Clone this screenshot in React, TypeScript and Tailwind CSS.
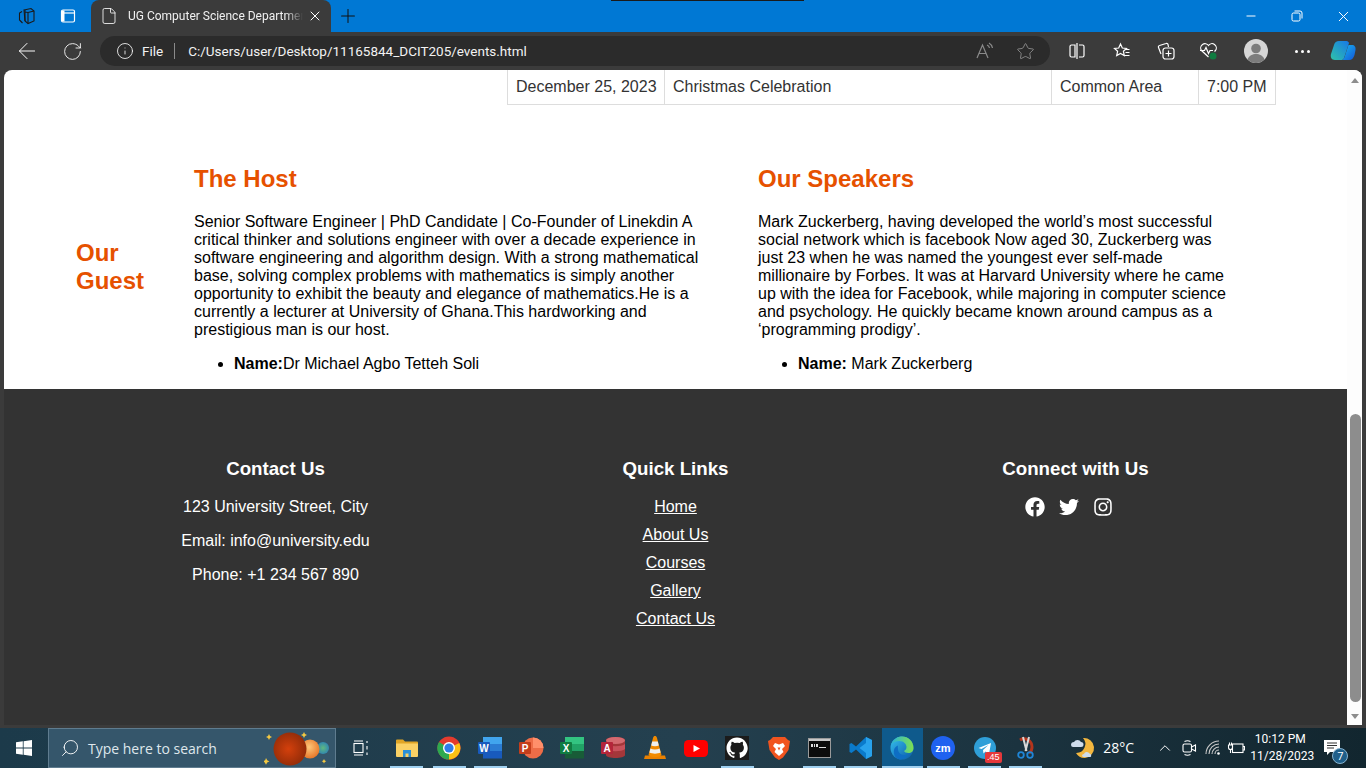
import { ArrowLeft, ChevronUp, File, Info, Minus, Plus, RotateCw, Search, Star, X } from "lucide-react"
import { FaFacebook, FaInstagram, FaTwitter } from "react-icons/fa"

const Segoe = "font-['Open_Sans',sans-serif]"
const Narrow = "font-['Roboto',sans-serif]"

const WorkspacesIcon = () => (
  <svg width="18" height="18" viewBox="0 0 18 18" fill="none" stroke="#1a1a1a" strokeWidth="1.1">
    <path d="M7 3l7-1.5 3 2.5v10l-6 2.5-3-2.5z" />
    <path d="M5 4.5L2.5 6v7l3 3M8 3v11M11 5.5V16M8 5l3 .5 6-1.5" />
  </svg>
)

const VerticalTabsIcon = () => (
  <svg width="16" height="16" viewBox="0 0 16 16" fill="none" stroke="#fff" strokeWidth="1.2">
    <rect x="1.5" y="2" width="13" height="12" rx="1.5" />
    <path d="M1.5 5h13" />
    <path d="M2 2.5h2.5v11H2z" fill="#fff" stroke="none" />
  </svg>
)

const RestoreIcon = () => (
  <svg width="12" height="12" viewBox="0 0 12 12" fill="none" stroke="#fff" strokeWidth="1">
    <rect x="1" y="3" width="8" height="8" rx="1.5" />
    <path d="M3.5 1h5.5a2 2 0 0 1 2 2v5.5" />
  </svg>
)

const ReadAloudIcon = () => (
  <svg width="20" height="18" viewBox="0 0 20 18" fill="none" stroke="#8a8a8a" strokeWidth="1.2">
    <path d="M2 16L7.500 3 13 16M4 11.500h7" />
    <path d="M12 3a4 4 0 0 1 2.500 3M14 1a7 7 0 0 1 3.500 5" />
  </svg>
)

const SplitIcon = () => (
  <svg width="18" height="18" viewBox="0 0 18 18" fill="none" stroke="#fff" strokeWidth="1.2">
    <path d="M7 3H3.500A1.500 1.500 0 0 0 2 4.500v9A1.500 1.500 0 0 0 3.500 15H7zM11 3h3.500A1.500 1.500 0 0 1 16 4.500v9a1.500 1.500 0 0 1-1.500 1.500H11M9 1v16" />
  </svg>
)

const FavoritesIcon = () => (
  <svg width="18" height="18" viewBox="0 0 18 18" fill="none" stroke="#fff" strokeWidth="1.2">
    <path d="M7.500 2l1.800 4 4.200.4-3.100 2.900.9 4.300-3.800-2.200-3.800 2.200.9-4.300L1.500 6.400 5.700 6z" />
    <path d="M12.500 7.500h4M12.500 10.500h4M11.500 13.500h5" />
  </svg>
)

const CollectionsIcon = () => (
  <svg width="18" height="18" viewBox="0 0 18 18" fill="none" stroke="#fff" strokeWidth="1.2">
    <path d="M4 12L1.500 5.500a1.500 1.500 0 0 1 1-2L9 1.500a1.500 1.500 0 0 1 2 1L11.500 5" />
    <rect x="6" y="6" width="11" height="11" rx="2.500" />
    <path d="M11.500 8.500v6M8.500 11.500h6" />
  </svg>
)

const HealthIcon = () => (
  <svg width="20" height="18" viewBox="0 0 20 18" fill="none">
    <path d="M9.500 15L2.500 8.500a4 4 0 0 1 7-5 4 4 0 0 1 7 5l-1 1" stroke="#fff" strokeWidth="1.200" />
    <path d="M1 8.500h4.500l1.500-3 2.500 6 1.500-3h3" stroke="#fff" strokeWidth="1.200" />
    <circle cx="14" cy="14" r="3.500" fill="#107c41" />
  </svg>
)

const AvatarIcon = () => (
  <svg width="24" height="24" viewBox="0 0 24 24">
    <circle cx="12" cy="12" r="12" fill="#d6d6d6" />
    <circle cx="12" cy="9.500" r="4.800" fill="#7c7c7c" />
    <path d="M3.500 20.500c1.500-4 5-5.500 8.500-5.500s7 1.500 8.500 5.500A12 12 0 0 1 3.500 20.500z" fill="#7c7c7c" />
  </svg>
)

const CopilotIcon = () => (
  <svg width="26" height="24" viewBox="0 0 26 24">
    <defs>
      <linearGradient id="copA" x1="0" y1="1" x2="1" y2="0">
        <stop offset="0" stopColor="#2fc3a8" />
        <stop offset="1" stopColor="#1778e8" />
      </linearGradient>
      <linearGradient id="copB" x1="0" y1="0" x2="1" y2="1">
        <stop offset="0" stopColor="#17b7ef" />
        <stop offset="1" stopColor="#1456d8" />
      </linearGradient>
    </defs>
    <path d="M9 2h7.500c1.500 0 2 1 2.500 2L14 19c-.5 1.500-1.500 2-3 2H5c-3.500 0-4.800-3-4-6l3-9c.7-2.500 2.500-4 5-4z" fill="url(#copA)" />
    <path d="M12 21h7c3 0 4.500-2 5.500-5l1-5c.5-3-1-5-3.500-5h-3.500l-4 12c-.5 1.500-1.500 3-2.500 3z" fill="url(#copB)" />
  </svg>
)

const WindowsLogo = () => (
  <svg width="16" height="16" viewBox="0 0 16 16" fill="#fff">
    <path d="M0 2.300l6.800-1v6.300H0zM7.600 1.200L16 0v7.600H7.600zM0 8.400h6.800v6.300l-6.800-1zM7.600 8.400H16V16l-8.400-1.200z" />
  </svg>
)

const Planets = () => (
  <svg width="70" height="36" viewBox="0 0 70 36">
    <defs>
      <radialGradient id="marsGrad" cx="0.45" cy="0.5" r="0.6">
        <stop offset="0" stopColor="#d4400c" />
        <stop offset="1" stopColor="#8c2a08" />
      </radialGradient>
      <radialGradient id="sunGrad" cx="0.45" cy="0.4" r="0.6">
        <stop offset="0" stopColor="#fdc77a" />
        <stop offset="1" stopColor="#e8782a" />
      </radialGradient>
      <radialGradient id="earthGrad" cx="0.5" cy="0.5" r="0.6">
        <stop offset="0" stopColor="#5fb87f" />
        <stop offset="1" stopColor="#2a7fb8" />
      </radialGradient>
    </defs>
    <circle cx="59" cy="18" r="6" fill="url(#earthGrad)" />
    <circle cx="46" cy="19" r="9.500" fill="url(#sunGrad)" />
    <circle cx="26" cy="19" r="16.500" fill="url(#marsGrad)" />
    <g fill="#f4c842">
      <path d="M5 4l1 2 2 1-2 1-1 2-1-2-2-1 2-1zM40 2l1 2 2 1-2 1-1 2-1-2-2-1 2-1z" />
      <path d="M2 28l1.200 2.200 2.200 1.200-2.200 1.200-1.200 2.200-1.200-2.200L-1 31.400l2.200-1.200zM60 29l.8 1.500 1.500.8-1.500.8-.8 1.500-.8-1.500-1.500-.8 1.500-.8z" />
    </g>
  </svg>
)

const TaskViewIcon = () => (
  <svg width="16" height="16" viewBox="0 0 16 16" fill="none" stroke="#fff" strokeWidth="1.100">
    <rect x="1" y="3.500" width="9" height="9" />
    <path d="M1 1h9M1 15h9M14 1v2M14 6v3.500M14 12.500v2.500" />
  </svg>
)

const ExplorerIcon = () => (
  <svg width="22" height="20" viewBox="0 0 22 20">
    <path d="M0 2.500A1 1 0 0 1 1 1.500h6l2 2h12a1 1 0 0 1 1 1V6H0z" fill="#e0a526" />
    <path d="M0 5.500h22V18a1 1 0 0 1-1 1H1a1 1 0 0 1-1-1z" fill="#fad165" />
    <path d="M7 12h8v7h-2.500v-3.500h-3V19H7z" fill="#2a8fd8" />
  </svg>
)

const ChromeIcon = () => (
  <svg width="24" height="24" viewBox="0 0 24 24">
    <circle cx="12" cy="12" r="11.500" fill="#e33b2e" />
    <path d="M12 12L22.300 7A11.500 11.500 0 0 1 12 23.500z" fill="#fbc116" />
    <path d="M12 12l-10-6A11.500 11.500 0 0 0 12 23.500z" fill="#2da94f" />
    <circle cx="12" cy="12" r="6" fill="#fff" />
    <circle cx="12" cy="12" r="4.600" fill="#2f7de9" />
  </svg>
)

const OfficeTile = ({ letter, tile, colors }: { letter: string; tile: string; colors: string[] }) => (
  <svg width="25" height="22" viewBox="0 0 25 22">
    <rect x="5" y="0" width="19" height="7.500" fill={colors[0]} />
    <rect x="5" y="7" width="19" height="7.500" fill={colors[1]} />
    <rect x="5" y="14" width="19" height="7.500" fill={colors[2]} />
    <rect x="0" y="5" width="12" height="12" rx="1" fill={tile} />
    <text x="6" y="15" fontSize="10" fontWeight="700" fill="#fff" textAnchor="middle" fontFamily="Liberation Sans">
      {letter}
    </text>
  </svg>
)

const PowerPointIcon = () => (
  <svg width="25" height="22" viewBox="0 0 25 22">
    <circle cx="14" cy="11" r="10.500" fill="#ed6c47" />
    <path d="M14 .5A10.500 10.500 0 0 1 24.500 11H14z" fill="#ff8f6b" />
    <rect x="0" y="5" width="12" height="12" rx="1" fill="#c43e1c" />
    <text x="6" y="15" fontSize="10" fontWeight="700" fill="#fff" textAnchor="middle" fontFamily="Liberation Sans">
      P
    </text>
  </svg>
)

const AccessIcon = () => (
  <svg width="25" height="22" viewBox="0 0 25 22">
    <path d="M5 3c0-4 19-4 19 0v15c0 4-19 4-19 0z" fill="#a4373a" />
    <ellipse cx="14.500" cy="3.500" rx="9.500" ry="3.500" fill="#d46a70" />
    <path d="M5 7c3 3 16 3 19 0v5c-3 3-16 3-19 0z" fill="#c8515b" />
    <rect x="0" y="5" width="12" height="12" rx="1" fill="#b3263a" />
    <text x="6" y="15" fontSize="10" fontWeight="700" fill="#fff" textAnchor="middle" fontFamily="Liberation Sans">
      A
    </text>
  </svg>
)

const VlcIcon = () => (
  <svg width="22" height="24" viewBox="0 0 22 24">
    <path d="M1 19.500h20L22 23H0z" fill="#e98000" />
    <path d="M11 0c1 0 1.500.5 2 2l4.500 17c-3 3-10 3-13 0L9 2c.5-1.500 1-2 2-2z" fill="#f18a00" />
    <path d="M8.200 5.500h5.600l1 4c-2 1-5.600 1-7.600 0zM6.400 12.500c2.500 1.200 6.700 1.200 9.200 0l1 4c-3 1.500-8.200 1.500-11.200 0z" fill="#efefef" />
  </svg>
)

const YoutubeIcon = () => (
  <svg width="24" height="17" viewBox="0 0 24 17">
    <rect width="24" height="17" rx="4.500" fill="#f00" />
    <path d="M9.500 5l6.500 3.500-6.500 3.500z" fill="#fff" />
  </svg>
)

const GithubIcon = () => (
  <svg width="24" height="24" viewBox="0 0 24 24">
    <rect width="24" height="24" fill="#1b1b1b" />
    <path
      fill="#fff"
      d="M12 1.500C6.200 1.500 1.500 6.200 1.500 12c0 4.600 3 8.600 7.200 10 .5.100.7-.2.700-.5v-1.800c-2.900.6-3.500-1.400-3.500-1.400-.5-1.200-1.200-1.500-1.200-1.500-1-.7.100-.7.100-.7 1 .1 1.600 1.100 1.600 1.100.9 1.600 2.500 1.100 3.100.9.100-.7.400-1.100.700-1.400-2.300-.3-4.800-1.200-4.800-5.200 0-1.100.4-2.100 1.100-2.800-.1-.3-.5-1.300.1-2.800 0 0 .9-.3 2.900 1.100a10 10 0 0 1 5.300 0c2-1.400 2.900-1.100 2.900-1.100.6 1.500.2 2.500.1 2.800.7.700 1.100 1.700 1.100 2.800 0 4-2.500 4.900-4.800 5.200.4.300.7 1 .7 1.900v2.900c0 .3.200.6.700.5 4.200-1.400 7.200-5.400 7.200-10C22.500 6.200 17.800 1.500 12 1.500z"
    />
  </svg>
)

const BraveIcon = () => (
  <svg width="22" height="24" viewBox="0 0 22 24">
    <path d="M5 1h12l3 3 2 1-1.500 9L15 21.500 11 24l-4-2.500L1.500 14 0 5l2-1z" fill="#f1541f" />
    <path d="M7 7l4 1.500L15 7l2 3-3 3 1.500 3-4.500 4-4.500-4L8 13l-3-3z" fill="#fff" />
    <path d="M9.500 11.500h3l-1.500 3z" fill="#f1541f" />
  </svg>
)

const CmdIcon = () => (
  <svg width="23" height="20" viewBox="0 0 23 20">
    <rect x="0.500" y="0.500" width="22" height="19" fill="#0c0c0c" stroke="#9a9a9a" />
    <rect x="1" y="1" width="21" height="2" fill="#c8c8c8" />
    <path d="M3 6h2v3H3zM6 6h1v3H6zM8 6h2v3H8zM11 9h7v1h-7z" fill="#ddd" />
  </svg>
)

const VscodeIcon = () => (
  <svg width="24" height="24" viewBox="0 0 24 24">
    <path d="M17 1l6 3v16l-6 3L7 13.500 2.500 17 .5 16v-8l2-1L7 10.500z" fill="#0a7acb" />
    <path d="M17 1l6 3v16l-6 3zM17 7l-6.500 5 6.500 5z" fill="#28a2ec" fillRule="evenodd" />
  </svg>
)

const EdgeIcon = () => (
  <svg width="24" height="24" viewBox="0 0 24 24">
    <defs>
      <linearGradient id="edgeA" x1="0" y1="0" x2="1" y2="1">
        <stop offset="0" stopColor="#35c1f1" />
        <stop offset="1" stopColor="#0c59a4" />
      </linearGradient>
      <linearGradient id="edgeB" x1="0" y1="0" x2="1" y2="0">
        <stop offset="0" stopColor="#2bb3d6" />
        <stop offset="1" stopColor="#7ee04f" />
      </linearGradient>
    </defs>
    <circle cx="12" cy="12" r="11.500" fill="url(#edgeA)" />
    <path d="M1 9C3 3 8 .5 12 .5 18 .5 23.500 5 23.500 12c0 3-2 5-5 5-2.500 0-4-1-4.500-2 1.500-1 2.500-2 2.500-4 0-3-3-6-7-6-4 0-7 2-8.500 4z" fill="url(#edgeB)" />
    <path d="M8 13c0 3 2.500 6 6 6 1.500 0 3-.5 4-1-2 3-5 5.500-7 5.500C6 23.500 3 19 4 14c.5-2 2-4 4-4.500-.3 1-.3 2-0 3.500z" fill="#0e6ec4" />
  </svg>
)

const ZoomIcon = () => (
  <svg width="24" height="24" viewBox="0 0 24 24">
    <circle cx="12" cy="12" r="12" fill="#1f62f0" />
    <text x="12" y="15.500" fontSize="11" fontWeight="700" fill="#fff" textAnchor="middle" fontFamily="Liberation Sans">
      zm
    </text>
  </svg>
)

const TelegramIcon = () => (
  <span className="relative flex">
    <svg width="22" height="22" viewBox="0 0 22 22">
      <circle cx="11" cy="11" r="11" fill="#2f9fd8" />
      <path d="M4.500 11L17 6l-2 11-3.500-2.500-2 2-.5-3.500 5.500-5-7 4z" fill="#fff" />
    </svg>
    <span className="absolute -right-1.5 -bottom-1 bg-[#e5383b] rounded-[2px] px-[2px] text-[9px] leading-[11px] text-white font-['Liberation_Sans',sans-serif]">
      .45
    </span>
  </span>
)

const SnipIcon = () => (
  <svg width="20" height="24" viewBox="0 0 20 24" fill="none">
    <path d="M4 4a8 8 0 0 1 12 7c0 3-1 5-3 6" stroke="#b5351c" strokeWidth="3" />
    <path d="M7 1l3.500 14M13 1l-3.500 14" stroke="#d8d8d8" strokeWidth="2" />
    <circle cx="5" cy="19" r="2.800" stroke="#1f86d8" strokeWidth="1.800" />
    <circle cx="14" cy="19" r="2.800" stroke="#1f86d8" strokeWidth="1.800" />
  </svg>
)

const WeatherIcon = () => (
  <svg width="26" height="24" viewBox="0 0 26 24">
    <path d="M14 2a10 10 0 0 1 2 20 10 10 0 0 1-9-5 9 9 0 0 0 7-15z" fill="#f3b73f" />
    <path d="M2 9a3 3 0 0 1 3-3 4 4 0 0 1 7 0 2.500 2.500 0 0 1 0 5H4a2.200 2.200 0 0 1-2-2z" fill="#cfdcec" />
    <path d="M13 20a2 2 0 0 1 2-2 3 3 0 0 1 5.500-.5 2 2 0 0 1 1 3.500H15a2 2 0 0 1-2-1z" fill="#cfdcec" />
  </svg>
)

const MeetIcon = () => (
  <svg width="16" height="20" viewBox="0 0 16 20" fill="none" stroke="#fff" strokeWidth="1.100">
    <rect x="2" y="6" width="8.500" height="8" rx="1.500" />
    <path d="M10.500 9l4-2v6l-4-2zM3.500 3.500a7 7 0 0 1 6 0M3.500 16.500a7 7 0 0 0 6 0" />
  </svg>
)

const WifiIcon = () => (
  <svg width="16" height="16" viewBox="0 0 16 16" fill="none" stroke="#c9c9c9" strokeWidth="1.100">
    <path d="M1 14A13 13 0 0 1 14 1M4 14A10 10 0 0 1 14 4M7 14a7 7 0 0 1 7-7M10 14a4 4 0 0 1 4-4" />
    <circle cx="13.500" cy="13.500" r="1.300" fill="#fff" stroke="none" />
  </svg>
)

const BatteryIcon = () => (
  <svg width="18" height="16" viewBox="0 0 18 16" fill="none" stroke="#fff" strokeWidth="1.100">
    <rect x="5.500" y="4" width="10.500" height="8.500" />
    <path d="M16 6.500h1.500v3.500H16M1 5h5M2.500 2.500V5M4.500 2.500V5M1.500 5v2.500a2 2 0 0 0 4 0V5M3.500 9.500V13" />
  </svg>
)

const Toolbtn = ({ x, children }: { x: string; children: React.ReactNode }) => (
  <span className={`absolute top-0 h-full w-8 -ml-4 flex items-center justify-center ${x}`}>{children}</span>
)

function TitleBar() {
  return (
    <div className="relative h-8 bg-[#0078d4] shrink-0">
      <div className="absolute left-[611px] top-0 h-px w-[193px] bg-[#1a1a1a]" />
      <Toolbtn x="left-[26px]">
        <WorkspacesIcon />
      </Toolbtn>
      <Toolbtn x="left-[68px]">
        <VerticalTabsIcon />
      </Toolbtn>
      <div className={`absolute left-[91px] top-0 h-8 w-[240px] bg-[#3b3b3b] rounded-t-lg flex items-center pl-[9px] ${Narrow}`}>
        <File size={18} strokeWidth={1.1} className="text-white shrink-0" />
        <span className="ml-[10px] w-[175px] overflow-hidden whitespace-nowrap text-[12px] text-[#f0f0f0] [mask-image:linear-gradient(to_right,black_90%,transparent)]">
          UG Computer Science Department
        </span>
        <X size={16} strokeWidth={1.5} className="text-white ml-[4px] shrink-0" />
      </div>
      <Toolbtn x="left-[348px]">
        <Plus size={22} strokeWidth={1.1} className="text-[#111]" />
      </Toolbtn>
      <Toolbtn x="left-[1251px]">
        <Minus size={14} strokeWidth={1.7} className="text-white" />
      </Toolbtn>
      <Toolbtn x="left-[1297px]">
        <RestoreIcon />
      </Toolbtn>
      <Toolbtn x="left-[1343px]">
        <X size={17} strokeWidth={1.4} className="text-white" />
      </Toolbtn>
    </div>
  )
}

function AddressBar() {
  return (
    <div className="relative h-[38px] bg-[#3b3b3b] shrink-0">
      <Toolbtn x="left-[27px]">
        <ArrowLeft size={26} strokeWidth={0.9} className="text-white" />
      </Toolbtn>
      <Toolbtn x="left-[72px]">
        <RotateCw size={21} strokeWidth={1} className="text-white" />
      </Toolbtn>
      <div className={`absolute left-[100px] top-[4px] h-[30px] w-[950px] rounded-full bg-[#2b2b2b] flex items-center pl-[16px] text-[13.5px] text-[#f2f2f2] ${Narrow}`}>
        <Info size={18} strokeWidth={1.1} className="text-white" />
        <span className="ml-[8px]">File</span>
        <span className="ml-[11px] h-[16px] w-px bg-[#8a8a8a]" />
        <span className="ml-[13px]">C:/Users/user/Desktop/11165844_DCIT205/events.html</span>
      </div>
      <Toolbtn x="left-[985px]">
        <ReadAloudIcon />
      </Toolbtn>
      <Toolbtn x="left-[1025px]">
        <Star size={19} strokeWidth={1} className="text-[#9a9a9a]" />
      </Toolbtn>
      <Toolbtn x="left-[1077px]">
        <SplitIcon />
      </Toolbtn>
      <Toolbtn x="left-[1122px]">
        <FavoritesIcon />
      </Toolbtn>
      <Toolbtn x="left-[1166px]">
        <CollectionsIcon />
      </Toolbtn>
      <Toolbtn x="left-[1209px]">
        <HealthIcon />
      </Toolbtn>
      <Toolbtn x="left-[1256px]">
        <AvatarIcon />
      </Toolbtn>
      <Toolbtn x="left-[1302px]">
        <span className="flex gap-[3px]">
          <i className="w-[3px] h-[3px] rounded-full bg-white" />
          <i className="w-[3px] h-[3px] rounded-full bg-white" />
          <i className="w-[3px] h-[3px] rounded-full bg-white" />
        </span>
      </Toolbtn>
      <Toolbtn x="left-[1343px]">
        <CopilotIcon />
      </Toolbtn>
    </div>
  )
}

function Scrollbar() {
  return (
    <div className="w-[15px] shrink-0 bg-[#fdfdfd] relative">
      <div className="absolute left-[4px] top-[8px] w-0 h-0 border-l-[4px] border-r-[4px] border-b-[5px] border-l-transparent border-r-transparent border-b-[#8d8d8d]" />
      <div className="absolute left-[3px] top-[344px] w-[11px] h-[288px] rounded-full bg-[#8d8d8d]" />
      <div className="absolute left-[4px] bottom-[6px] w-0 h-0 border-l-[4px] border-r-[4px] border-t-[5px] border-l-transparent border-r-transparent border-t-[#8d8d8d]" />
    </div>
  )
}

function EventsTable() {
  const cell = "border border-t-0 border-[#ddd] px-2 pt-2 pb-2 leading-[18px] whitespace-nowrap"
  return (
    <table className="ml-[503px] w-[768px] table-fixed border-collapse text-[#333]">
      <tbody>
        <tr>
          <td className={`w-[157px] ${cell}`}>December 25, 2023</td>
          <td className={`w-[387px] ${cell}`}>Christmas Celebration</td>
          <td className={`w-[147px] ${cell}`}>Common Area</td>
          <td className={`w-[77px] ${cell}`}>7:00 PM</td>
        </tr>
      </tbody>
    </table>
  )
}

function GuestSection() {
  return (
    <section className="mt-[40px] h-[244px] flex items-center pl-[72px] text-black leading-[18px]">
      <h2 className="w-[118px] text-[24px] leading-[28px] font-bold text-[#e65100]">
        Our
        <br />
        Guest
      </h2>
      <div className="w-[510px] self-start">
        <h3 className="text-[24px] leading-[28px] font-bold text-[#e65100] mt-[20px] mb-[20px]">The Host</h3>
        <p>
          Senior Software Engineer | PhD Candidate | Co-Founder of Linekdin A critical thinker and solutions engineer with over a decade experience in software engineering and algorithm design. With a strong mathematical base, solving complex problems with mathematics is simply another opportunity to exhibit the beauty and elegance of mathematics.He is a currently a lecturer at University of Ghana.This hardworking and prestigious man is our host.
        </p>
        <ul className="list-disc pl-10 mt-4">
          <li>
            <b>Name:</b>Dr Michael Agbo Tetteh Soli
          </li>
        </ul>
      </div>
      <div className="w-[472px] ml-[54px] self-start">
        <h3 className="text-[24px] leading-[28px] font-bold text-[#e65100] mt-[20px] mb-[20px]">Our Speakers</h3>
        <p>
          Mark Zuckerberg, having developed the world’s most successful social network which is facebook Now aged 30, Zuckerberg was just 23 when he was named the youngest ever self-made millionaire by Forbes. It was at Harvard University where he came up with the idea for Facebook, while majoring in computer science and psychology. He quickly became known around campus as a ‘programming prodigy’.
        </p>
        <ul className="list-disc pl-10 mt-4">
          <li>
            <b>Name:</b> Mark Zuckerberg
          </li>
        </ul>
      </div>
    </section>
  )
}

const footerLinks = ["Home", "About Us", "Courses", "Gallery", "Contact Us"]

function Footer() {
  return (
    <footer className="flex-1 bg-[#333] text-white text-center leading-[18px]">
      <div className="w-[1200px] mx-auto grid grid-cols-3 pt-[69px]">
        <div>
          <h4 className="text-[18.72px] leading-[22px] font-bold mb-[18px]">Contact Us</h4>
          <div className="flex flex-col gap-4">
            <p>123 University Street, City</p>
            <p>Email: info@university.edu</p>
            <p>Phone: +1 234 567 890</p>
          </div>
        </div>
        <div>
          <h4 className="text-[18.72px] leading-[22px] font-bold mb-[18px]">Quick Links</h4>
          <ul className="flex flex-col gap-[10px]">
            {footerLinks.map((link) => (
              <li key={link}>
                <a href="#" className="underline">
                  {link}
                </a>
              </li>
            ))}
          </ul>
        </div>
        <div>
          <h4 className="text-[18.72px] leading-[22px] font-bold mb-[17px]">Connect with Us</h4>
          <div className="flex justify-center items-center gap-[14px] h-[20px] pr-[14px]">
            <FaFacebook size={20} />
            <FaTwitter size={20} />
            <FaInstagram size={20} />
          </div>
        </div>
      </div>
    </footer>
  )
}

const taskbarApps = [
  { icon: <ExplorerIcon />, bar: "w-[33px]", wide: true },
  { icon: <ChromeIcon />, bar: "w-[33px]" },
  { icon: <OfficeTile letter="W" tile="#185abd" colors={["#41a5ee", "#2b7cd3", "#185abd"]} />, bar: "w-[33px]" },
  { icon: <PowerPointIcon />, bar: "" },
  { icon: <OfficeTile letter="X" tile="#107c41" colors={["#33c481", "#21a366", "#185c37"]} />, bar: "" },
  { icon: <AccessIcon />, bar: "" },
  { icon: <VlcIcon />, bar: "" },
  { icon: <YoutubeIcon />, bar: "" },
  { icon: <GithubIcon />, bar: "w-[33px]" },
  { icon: <BraveIcon />, bar: "" },
  { icon: <CmdIcon />, bar: "w-[33px]" },
  { icon: <VscodeIcon />, bar: "w-[33px]" },
  { icon: <EdgeIcon />, bar: "w-full", active: true },
  { icon: <ZoomIcon />, bar: "w-[33px]" },
  { icon: <TelegramIcon />, bar: "w-[33px]" },
  { icon: <SnipIcon />, bar: "w-[33px]" },
]

function Taskbar() {
  return (
    <div className="h-10 shrink-0 flex items-center bg-gradient-to-r from-[#1c3a4a] via-[#24404f] to-[#12262f] text-white">
      <div className="w-12 h-full flex items-center justify-center">
        <WindowsLogo />
      </div>
      <div className={`w-[288px] h-full border border-[#5f7c8f] bg-[#35566b] flex items-center pl-[11px] ${Segoe}`}>
        <Search size={20} strokeWidth={1.1} className="text-white -scale-x-100" />
        <span className="ml-[8px] text-[14px] text-[#dfe7ec] whitespace-nowrap">Type here to search</span>
        <span className="ml-auto mr-[1px] flex">
          <Planets />
        </span>
      </div>
      <div className="w-[49px] h-full flex items-center justify-center">
        <TaskViewIcon />
      </div>
      <div className="flex h-full">
        {taskbarApps.map((app, i) => (
          <div
            key={i}
            className={`relative h-full flex items-center justify-center ${app.wide ? "w-[43.5px]" : "w-[41.2px]"} ${app.active ? "bg-[#0f5a8c]" : ""}`}
          >
            {app.icon}
            {app.bar && <span className={`absolute bottom-0 h-[2px] bg-[#9fd0f0] ${app.bar}`} />}
          </div>
        ))}
      </div>
      <div className={`flex-1 h-full relative text-[14px] ${Segoe}`}>
        <Toolbtn x="left-[36px]">
          <WeatherIcon />
        </Toolbtn>
        <span className="absolute left-[57px] top-[10px] leading-[20px] whitespace-nowrap">28°C</span>
        <Toolbtn x="left-[119px]">
          <ChevronUp size={18} strokeWidth={1.3} />
        </Toolbtn>
        <Toolbtn x="left-[143px]">
          <MeetIcon />
        </Toolbtn>
        <Toolbtn x="left-[167px]">
          <WifiIcon />
        </Toolbtn>
        <Toolbtn x="left-[190px]">
          <BatteryIcon />
        </Toolbtn>
        <div className="absolute left-[204px] w-[60px] top-[3px] text-center text-[12px] leading-[17px] font-['Roboto',sans-serif]">
          <div>10:12 PM</div>
          <div className="whitespace-nowrap">11/28/2023</div>
        </div>
        <Toolbtn x="left-[286px]">
          <span className="relative flex">
            <svg width="16" height="16" viewBox="0 0 16 16" fill="#fff">
              <path d="M0 0h16v12H6l-3 3v-3H0z" />
              <path d="M3 3h10M3 5.500h10M3 8h7" stroke="#333" strokeWidth="1" />
            </svg>
            <span className="absolute -right-2 -bottom-2 w-[16px] h-[16px] rounded-full bg-[#1f5f8a] border border-[#88b4d0] text-[11px] leading-[14px] text-center">
              7
            </span>
          </span>
        </Toolbtn>
      </div>
    </div>
  )
}

export default function App() {
  return (
    <div className="h-screen overflow-hidden flex flex-col bg-[#3b3b3b] font-['Liberation_Sans',Arial,sans-serif] text-[16px]">
      <TitleBar />
      <AddressBar />
      <div className="h-[655px] shrink-0 mx-1 rounded-t-lg overflow-hidden flex bg-white">
        <main className="flex-1 min-w-0 flex flex-col">
          <EventsTable />
          <GuestSection />
          <Footer />
        </main>
        <Scrollbar />
      </div>
      <div className="h-[3px] shrink-0" />
      <Taskbar />
    </div>
  )
}
